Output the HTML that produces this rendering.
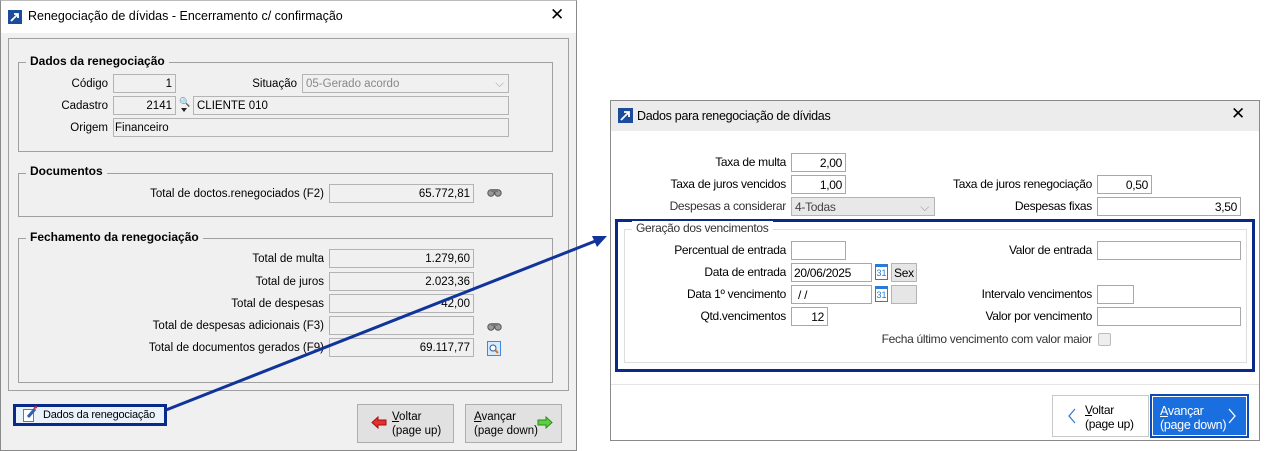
<!DOCTYPE html>
<html><head><meta charset="utf-8">
<style>
*{box-sizing:border-box;margin:0;padding:0}
body{width:1288px;height:451px;background:#fff;position:relative;overflow:hidden;font-family:"Liberation Sans",sans-serif;font-size:11.5px;color:#000}
.a{position:absolute}
.lbl{position:absolute;text-align:right;white-space:nowrap;line-height:19px}
.in{position:absolute;border:1px solid #b4b4b4;background:#f0f0f0;height:19px;line-height:18px;padding:0 3px;white-space:nowrap;overflow:hidden}
.r{text-align:right}
.w{background:#fff;border-color:#a8a8a8}
.gb{position:absolute;border:1px solid #a0a0a0}
.gt{position:absolute;background:#f0f0f0;font-weight:bold;padding:0 4px;line-height:14px;font-size:12px}
.rg{font-size:12px;letter-spacing:-0.3px}
</style></head><body>

<!-- Left window -->
<div class="a" style="left:0;top:0;width:577px;height:451px;border:1px solid #8a8a8a;border-top-color:#bbb;background:#f0f0f0"></div>
<div class="a" style="left:1px;top:1px;width:575px;height:32px;background:#fff"></div>
<svg class="a" style="left:8px;top:10px" width="14" height="14"><rect width="14" height="14" fill="#1b4c9c"/><path d="M3 11 L10 4 M6 4 H10 V8" stroke="#fff" stroke-width="1.8" fill="none"/></svg>
<div class="a" style="left:28px;top:9px;font-size:12.5px">Renegociação de dívidas - Encerramento c/ confirmação</div>
<div class="a" style="left:550px;top:5px;font-size:17px">✕</div>
<div class="a" style="left:8px;top:38px;width:561px;height:353px;border:1px solid #a0a0a0"></div>

<div class="gb" style="left:18px;top:62px;width:535px;height:90px"></div>
<div class="gt" style="left:26px;top:54px">Dados da renegociação</div>
<div class="lbl" style="left:20px;width:88px;top:75px">Código</div>
<div class="in r" style="left:113px;top:74px;width:63px">1</div>
<div class="lbl" style="left:200px;width:97px;top:75px">Situação</div>
<div class="in" style="left:302px;top:74px;width:207px;color:#888;background:#f0f0f0">05-Gerado acordo<span style="position:absolute;right:4px;color:#aaa">⌵</span></div>
<div class="lbl" style="left:20px;width:88px;top:97px">Cadastro</div>
<div class="in r" style="left:113px;top:96px;width:63px">2141</div>
<div class="a" style="left:179px;top:97px;font-size:9px;color:#5a8">🔍</div>
<div class="a" style="left:181px;top:108px;width:0;height:0;border-left:3px solid transparent;border-right:3px solid transparent;border-top:4px solid #222"></div>
<div class="in" style="left:193px;top:96px;width:316px">CLIENTE 010</div>
<div class="lbl" style="left:20px;width:88px;top:119px">Origem</div>
<div class="in" style="left:113px;top:118px;width:396px;padding-left:1px">Financeiro</div>

<div class="gb" style="left:18px;top:173px;width:535px;height:44px"></div>
<div class="gt" style="left:26px;top:164px">Documentos</div>
<div class="lbl" style="left:100px;width:224px;top:185px">Total de doctos.renegociados (F2)</div>
<div class="in r" style="left:329px;top:184px;width:145px">65.772,81</div>
<svg class="a" style="left:487px;top:187px" width="15" height="10"><circle cx="4" cy="6" r="3.2" fill="#999" stroke="#555"/><circle cx="11" cy="6" r="3.2" fill="#999" stroke="#555"/><rect x="4" y="2" width="7" height="3" fill="#777"/></svg>

<div class="gb" style="left:18px;top:238px;width:535px;height:145px"></div>
<div class="gt" style="left:26px;top:230px">Fechamento da renegociação</div>
<div class="lbl" style="left:100px;width:224px;top:250px">Total de multa</div>
<div class="in r" style="left:329px;top:249px;width:145px">1.279,60</div>
<div class="lbl" style="left:100px;width:224px;top:273px">Total de juros</div>
<div class="in r" style="left:329px;top:272px;width:145px">2.023,36</div>
<div class="lbl" style="left:100px;width:224px;top:295px">Total de despesas</div>
<div class="in r" style="left:329px;top:294px;width:145px">42,00</div>
<div class="lbl" style="left:100px;width:224px;top:317px">Total de despesas adicionais (F3)</div>
<div class="in r" style="left:329px;top:316px;width:145px"></div>
<svg class="a" style="left:487px;top:321px" width="15" height="10"><circle cx="4" cy="6" r="3.2" fill="#999" stroke="#555"/><circle cx="11" cy="6" r="3.2" fill="#999" stroke="#555"/><rect x="4" y="2" width="7" height="3" fill="#777"/></svg>
<div class="lbl" style="left:100px;width:224px;top:339px">Total de documentos gerados (F9)</div>
<div class="in r" style="left:329px;top:338px;width:145px">69.117,77</div>
<svg class="a" style="left:487px;top:341px" width="14" height="15"><rect x="0.5" y="0.5" width="13" height="14" fill="#d6ebfd" stroke="#3a8ae0"/><circle cx="6" cy="7" r="3" fill="#fff" stroke="#1a5ab0"/><path d="M8 9 L11 12" stroke="#e07020" stroke-width="2"/></svg>

<div class="a" style="left:13px;top:404px;width:154px;height:22px;border:3px solid #0a2a8a;background:#eaf2fb;line-height:16px;padding-left:27px;white-space:nowrap;font-size:11px;letter-spacing:-0.2px">Dados da rene<u>g</u>ociação</div>
<svg class="a" style="left:22px;top:406px" width="16" height="17"><rect x="1.5" y="3.5" width="10" height="12" fill="#fff" stroke="#777"/><path d="M6 11 L13 3" stroke="#3060b0" stroke-width="3"/><path d="M12 2 L15 1" stroke="#e03030" stroke-width="2"/></svg>
<div class="a" style="left:357px;top:404px;width:97px;height:39px;border:1px solid #adadad;background:#e1e1e1;line-height:14px;padding:5px 0 0 34px"><u>V</u>oltar<br>(page up)</div>
<svg class="a" style="left:371px;top:416px" width="16" height="13"><path d="M1 6.5 L7 1 V4 H15 V9 H7 V12 Z" fill="#e53030" stroke="#a01010"/></svg>
<div class="a" style="left:465px;top:404px;width:97px;height:39px;border:1px solid #adadad;background:#e1e1e1;line-height:14px;padding:5px 0 0 8px"><u>A</u>vançar<br>(page down)</div>
<svg class="a" style="left:537px;top:416px" width="16" height="13"><path d="M15 6.5 L9 1 V4 H1 V9 H9 V12 Z" fill="#5cd040" stroke="#2a8a20"/></svg>

<!-- Right window -->
<div class="a rg" style="left:610px;top:100px;width:650px;height:341px;border:1px solid #8a8a8a;background:#fff"></div>
<div class="a" style="left:611px;top:101px;width:648px;height:30px;background:#ececec"></div>
<svg class="a" style="left:618px;top:108px" width="15" height="15"><rect width="15" height="15" fill="#1b4c9c"/><path d="M3 12 L11 4 M6 4 H11 V9" stroke="#fff" stroke-width="1.8" fill="none"/></svg>
<div class="a rg" style="left:637px;top:109px;font-size:12.5px">Dados para renegociação de dívidas</div>
<div class="a" style="left:1231px;top:104px;font-size:17px">✕</div>

<div class="lbl rg" style="left:640px;width:146px;top:153px">Taxa de multa</div>
<div class="in w r rg" style="left:791px;top:153px;width:55px">2,00</div>
<div class="lbl rg" style="left:640px;width:146px;top:175px">Taxa de juros vencidos</div>
<div class="in w r rg" style="left:791px;top:175px;width:55px">1,00</div>
<div class="lbl rg" style="left:900px;width:192px;top:175px">Taxa de juros renegociação</div>
<div class="in w r rg" style="left:1097px;top:175px;width:55px">0,50</div>
<div class="lbl rg" style="left:640px;width:146px;top:197px;color:#333">Despesas a considerar</div>
<div class="in rg" style="left:791px;top:197px;width:144px;color:#444;background:#e8e8e8">4-Todas<span style="position:absolute;right:5px;color:#999">⌵</span></div>
<div class="lbl rg" style="left:900px;width:192px;top:197px">Despesas fixas</div>
<div class="in w r rg" style="left:1097px;top:197px;width:144px">3,50</div>

<div class="a" style="left:615px;top:219px;width:640px;height:153px;border:3px solid #0a2a8a"></div>
<div class="a" style="left:624px;top:229px;width:623px;height:134px;border:1px solid #ddd"></div>
<div class="a rg" style="left:632px;top:221px;background:#fff;padding:0 4px;color:#333">Geração dos vencimentos</div>

<div class="lbl rg" style="left:640px;width:146px;top:241px">Percentual de entrada</div>
<div class="in w rg" style="left:791px;top:241px;width:55px"></div>
<div class="lbl rg" style="left:900px;width:192px;top:241px">Valor de entrada</div>
<div class="in w rg" style="left:1097px;top:241px;width:144px"></div>
<div class="lbl rg" style="left:640px;width:146px;top:263px">Data de entrada</div>
<div class="in w rg" style="left:791px;top:263px;width:81px;padding-left:2px">20/06/2025</div>
<div class="a" style="left:875px;top:264px;width:13px;height:16px;border:1px solid #2a7ad8;border-top-width:3px;font-size:9px;color:#2a7ad8;text-align:center;line-height:13px">31</div>
<div class="in rg" style="left:891px;top:263px;width:26px;background:#e6e6e6;padding:0 2px">Sex</div>
<div class="lbl rg" style="left:640px;width:146px;top:285px">Data 1º vencimento</div>
<div class="in w rg" style="left:791px;top:285px;width:81px;padding-left:6px">/ /</div>
<div class="a" style="left:875px;top:286px;width:13px;height:16px;border:1px solid #2a7ad8;border-top-width:3px;font-size:9px;color:#2a7ad8;text-align:center;line-height:13px">31</div>
<div class="in rg" style="left:891px;top:285px;width:26px;background:#e6e6e6"></div>
<div class="lbl rg" style="left:900px;width:192px;top:285px">Intervalo vencimentos</div>
<div class="in w rg" style="left:1097px;top:285px;width:37px"></div>
<div class="lbl rg" style="left:640px;width:146px;top:307px">Qtd.vencimentos</div>
<div class="in w r rg" style="left:791px;top:307px;width:37px">12</div>
<div class="lbl rg" style="left:900px;width:192px;top:307px">Valor por vencimento</div>
<div class="in w rg" style="left:1097px;top:307px;width:144px"></div>
<div class="lbl rg" style="left:800px;width:292px;top:330px;color:#333">Fecha último vencimento com valor maior</div>
<div class="a" style="left:1098px;top:333px;width:13px;height:13px;border:1px solid #bbb;border-radius:2px;background:#eee"></div>

<div class="a" style="left:611px;top:384px;width:648px;height:1px;background:#e4e4e4"></div>
<div class="a rg" style="left:1052px;top:395px;width:97px;height:42px;border:1px solid #c8c8c8;background:#fff;line-height:14px;padding:7px 0 0 32px"><u>V</u>oltar<br>(page up)</div>
<svg class="a" style="left:1068px;top:408px" width="8" height="16"><path d="M7 1 L1 8 L7 15" stroke="#3a7ad8" fill="none" stroke-width="1.3"/></svg>
<div class="a rg" style="left:1150px;top:394px;width:99px;height:44px;border:2px solid #0a4ab8;outline:1px solid #fff;outline-offset:-3px;background:#1a6fe0;color:#fff;line-height:14px;padding:8px 0 0 8px;font-size:12.5px"><u>A</u>vançar<br>(page down)</div>
<svg class="a" style="left:1228px;top:408px" width="8" height="16"><path d="M1 1 L7 8 L1 15" stroke="#fff" fill="none" stroke-width="1.3"/></svg>

<!-- Arrow -->
<svg class="a" style="left:0;top:0" width="1288" height="451">
<line x1="166" y1="410" x2="598" y2="240" stroke="#10349a" stroke-width="3"/>
<polygon points="607,236 592,236 597,247" fill="#10349a"/>
</svg>
</body></html>
